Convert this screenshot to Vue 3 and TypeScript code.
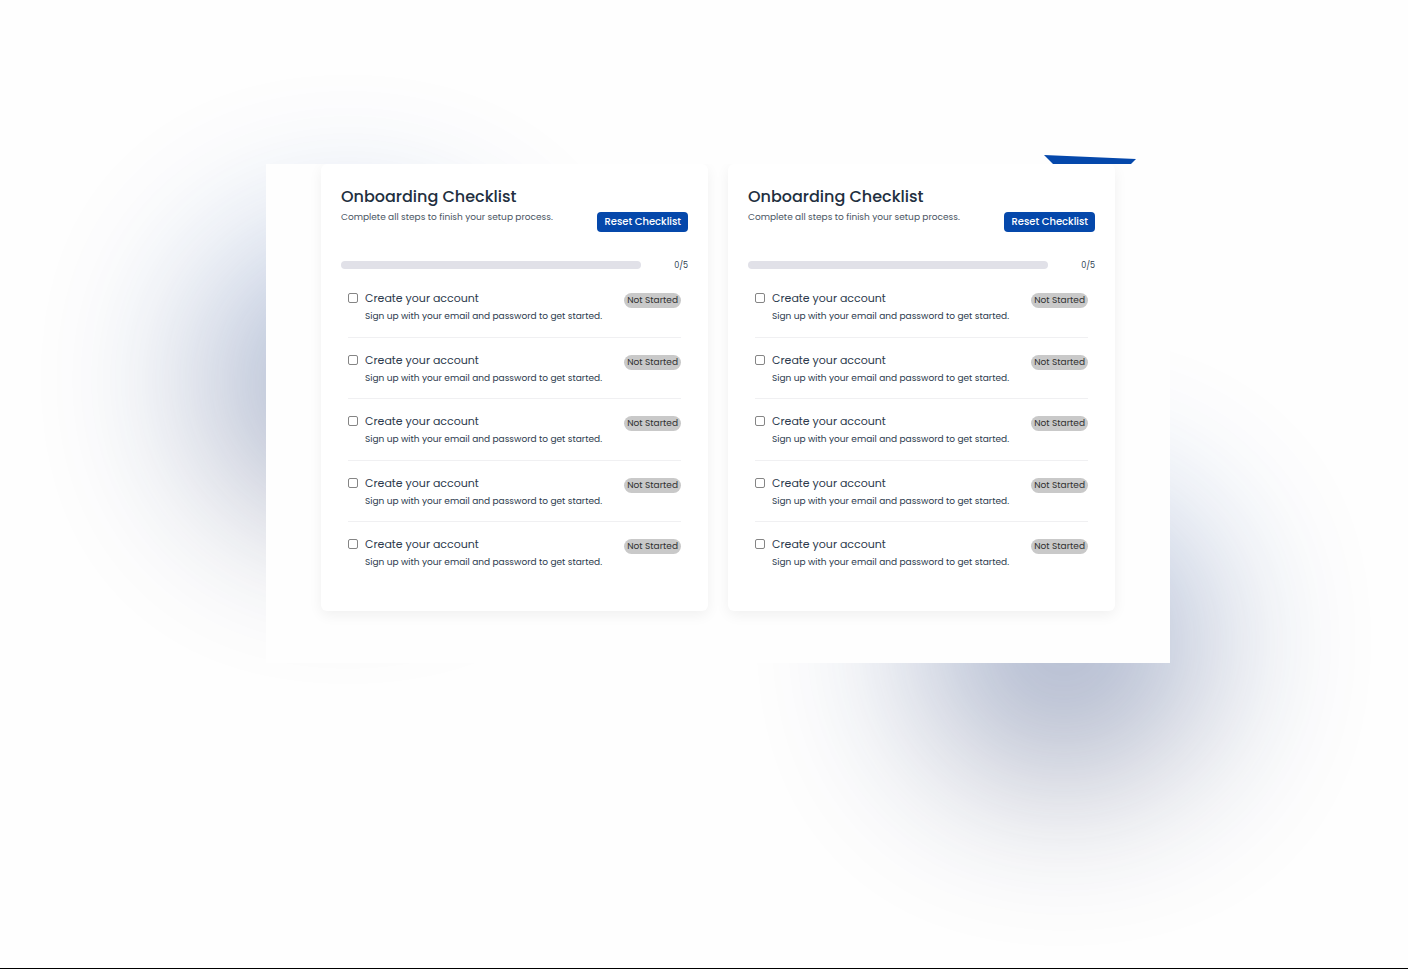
<script setup lang="ts">
import { ref } from 'vue'

interface Step {
  title: string
  description: string
  done: boolean
}

const makeSteps = (): Step[] =>
  Array.from({ length: 5 }, () => ({
    title: 'Create your account',
    description: 'Sign up with your email and password to get started.',
    done: false,
  }))

const checklists = ref([
  { id: 'first', steps: makeSteps() },
  { id: 'second', steps: makeSteps() },
])

const completed = (steps: Step[]) => steps.filter((s) => s.done).length

const reset = (steps: Step[]) => {
  steps.forEach((s) => {
    s.done = false
  })
}
</script>

<template>
  <main class="stage">
    <div class="glow glow-left" aria-hidden="true"></div>
    <div class="glow glow-right" aria-hidden="true"></div>
    <div class="panel">
      <svg class="ribbon" viewBox="0 0 92 9" aria-hidden="true">
        <path d="M0 0 L92 4 L87 9 L9 9 Z" fill="#0548ab" />
      </svg>
      <section v-for="list in checklists" :key="list.id" class="card">
        <header class="head">
          <div>
            <h2 class="title">Onboarding Checklist</h2>
            <p class="subtitle">Complete all steps to finish your setup process.</p>
          </div>
          <button type="button" class="reset" @click="reset(list.steps)">Reset Checklist</button>
        </header>
        <div class="progress">
          <div class="track">
            <div class="fill" :style="{ width: (completed(list.steps) / list.steps.length) * 100 + '%' }"></div>
          </div>
          <span class="count">{{ completed(list.steps) }}/{{ list.steps.length }}</span>
        </div>
        <ul class="steps">
          <li v-for="(step, i) in list.steps" :key="i" class="step">
            <input :id="`${list.id}-${i}`" v-model="step.done" type="checkbox" class="check" />
            <label :for="`${list.id}-${i}`" class="text">
              <span class="name">{{ step.title }}</span>
              <span class="desc">{{ step.description }}</span>
            </label>
            <span class="badge">{{ step.done ? 'Completed' : 'Not Started' }}</span>
          </li>
        </ul>
      </section>
    </div>
  </main>
</template>

<style>
body {
  margin: 0;
  background: #fefefe;
}
</style>

<style scoped>
.stage {
  position: relative;
  box-sizing: border-box;
  min-height: 100vh;
  padding: 164px 238px 64px 266px;
  overflow: hidden;
  border-bottom: 1px solid #000;
  font-family: Poppins, Inter, "Liberation Sans", sans-serif;
  color: #2c3a4d;
}
.glow {
  position: absolute;
  width: 280px;
  height: 280px;
  border-radius: 50%;
  background: linear-gradient(180deg, rgba(10, 80, 190, 0.7) 0%, #163478 50%, #1f1f44 100%);
  filter: blur(88px);
  opacity: 0.41;
}
.glow-left {
  left: 208px;
  top: 236px;
}
.glow-right {
  left: 924px;
  top: 498px;
}
.panel {
  position: relative;
  display: grid;
  grid-template-columns: 1fr 1fr;
  gap: 20px;
  padding: 0 55px 52px;
  background: #fefefe;
}
.ribbon {
  position: absolute;
  right: 34px;
  top: -9px;
  width: 92px;
  height: 9px;
}
.card {
  padding: 20px 20px 27px;
  border-radius: 6px;
  background: #fff;
  box-shadow: 0 4px 14px rgba(0, 0, 0, 0.06);
  clip-path: inset(0 -20px -30px -20px);
}
.head {
  display: flex;
  justify-content: space-between;
  align-items: flex-end;
  height: 48px;
}
.head > div {
  align-self: flex-start;
}
.title {
  margin: 0;
  font-size: 16px;
  line-height: 25px;
  font-weight: 500;
  color: #222f40;
}
.subtitle {
  margin: 0;
  font-size: 9px;
  line-height: 17px;
  color: #4a5563;
}
.reset {
  height: 20px;
  padding: 0 7px;
  border: 0;
  border-radius: 4px;
  background: #0548ab;
  color: #fff;
  font-family: inherit;
  font-size: 10px;
  line-height: 20px;
  font-weight: 500;
}
.progress {
  display: flex;
  justify-content: space-between;
  align-items: center;
  height: 16px;
  margin-top: 25px;
}
.track {
  flex: 0 0 300px;
  height: 8px;
  border-radius: 4px;
  background: #e1e1e8;
  overflow: hidden;
}
.fill {
  height: 100%;
  background: #0548ab;
}
.count {
  font-size: 8px;
  line-height: 17px;
}
.steps {
  display: grid;
  grid-auto-rows: 1fr;
  min-height: 308px;
  margin: 3px 0 0;
  padding: 0 7px;
  list-style: none;
}
.step {
  display: flex;
  align-items: flex-start;
  box-sizing: border-box;
  padding-top: 13px;
  border-bottom: 1px solid #f0f0f2;
}
.step:last-child {
  border-bottom: 0;
}
.check {
  appearance: none;
  box-sizing: border-box;
  width: 10px;
  height: 10px;
  margin: 4px 7px 0 0;
  border: 1px solid #858585;
  border-radius: 2px;
  background: #fff;
}
.check:checked {
  background: #0548ab;
}
.text {
  flex: 1;
}
.name,
.desc {
  display: block;
  white-space: nowrap;
}
.name {
  font-size: 11px;
  line-height: 18px;
}
.desc {
  font-size: 9px;
  line-height: 18px;
}
.badge {
  margin-top: 4px;
  padding: 0 3px;
  border-radius: 8px;
  background: #c9c9c9;
  color: #303030;
  font-size: 9px;
  line-height: 15px;
}
</style>
